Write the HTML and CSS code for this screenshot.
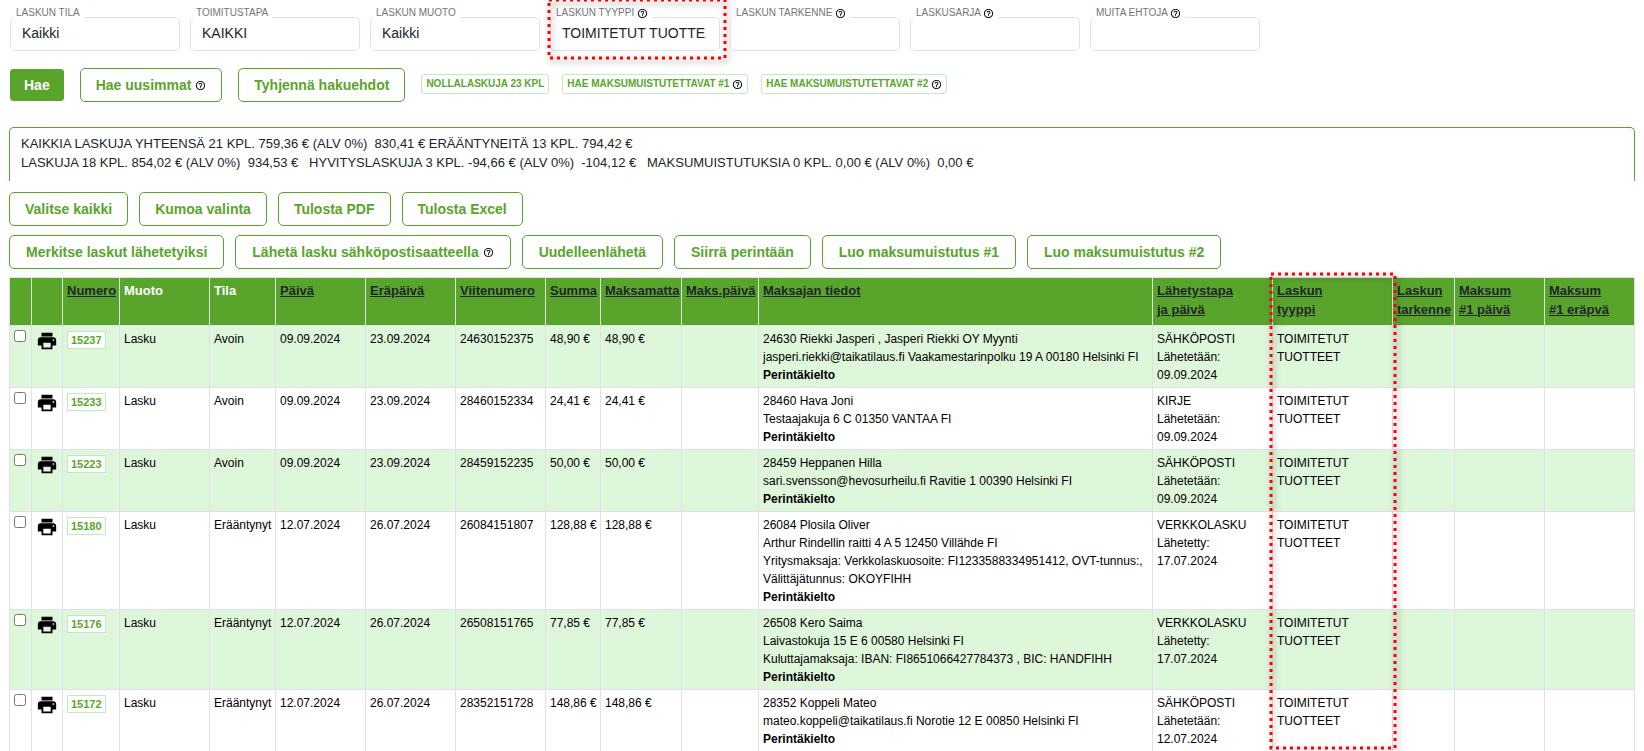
FILE: index.html
```
<!DOCTYPE html>
<html lang="fi">
<head>
<meta charset="utf-8">
<title>Laskut</title>
<link rel="stylesheet" href="styles.css">
</head>
<body>
<svg class="defs" aria-hidden="true">
  <symbol id="help" viewBox="0 0 24 24"><path d="M11 18h2v-2h-2v2zm1-16C6.48 2 2 6.48 2 12s4.480 10 10 10 10-4.480 10-10S17.520 2 12 2zm0 18c-4.410 0-8-3.590-8-8s3.590-8 8-8 8 3.590 8 8-3.590 8-8 8zm0-14c-2.210 0-4 1.790-4 4h2c0-1.100.900-2 2-2s2 .900 2 2c0 2-3 1.750-3 5h2c0-2.250 3-2.500 3-5 0-2.210-1.790-4-4-4z"/></symbol>
  <symbol id="print" viewBox="0 0 24 24"><path d="M19 8H5c-1.660 0-3 1.340-3 3v6h4v4h12v-4h4v-6c0-1.660-1.340-3-3-3zm-3 11H8v-5h8v5zm3-7c-.550 0-1-.450-1-1s.450-1 1-1 1 .450 1 1-.450 1-1 1zm-1-9H6v4h12V3z"/></symbol>
</svg>
<main class="page">
  <form class="filters">
    <div class="field"><label for="f1">LASKUN TILA</label><input id="f1" value="Kaikki"></div>
    <div class="field"><label for="f2">TOIMITUSTAPA</label><input id="f2" value="KAIKKI"></div>
    <div class="field"><label for="f3">LASKUN MUOTO</label><input id="f3" value="Kaikki"></div>
    <div class="field"><label for="f4">LASKUN TYYPPI <svg class="help"><use href="#help"/></svg></label><input id="f4" value="TOIMITETUT TUOTTEET">
      <svg class="marker marker-field" aria-hidden="true"><rect width="100%" height="100%"/></svg></div>
    <div class="field"><label for="f5">LASKUN TARKENNE <svg class="help"><use href="#help"/></svg></label><input id="f5"></div>
    <div class="field"><label for="f6">LASKUSARJA <svg class="help"><use href="#help"/></svg></label><input id="f6"></div>
    <div class="field"><label for="f7">MUITA EHTOJA <svg class="help"><use href="#help"/></svg></label><input id="f7"></div>
  </form>

  <div class="search-actions">
    <button class="btn btn-primary" type="button">Hae</button>
    <button class="btn" type="button">Hae uusimmat <svg class="help"><use href="#help"/></svg></button>
    <button class="btn" type="button">Tyhjennä hakuehdot</button>
    <div class="chips">
      <button class="chip" type="button">NOLLALASKUJA 23 KPL</button>
      <button class="chip" type="button">HAE MAKSUMUISTUTETTAVAT #1 <svg class="help"><use href="#help"/></svg></button>
      <button class="chip" type="button">HAE MAKSUMUISTUTETTAVAT #2 <svg class="help"><use href="#help"/></svg></button>
    </div>
  </div>

  <section class="summary">
    <p>KAIKKIA LASKUJA YHTEENSÄ 21 KPL. 759,36 € (ALV 0%) &nbsp;830,41 € ERÄÄNTYNEITÄ 13 KPL. 794,42 €</p>
    <p>LASKUJA 18 KPL. 854,02 € (ALV 0%) &nbsp;934,53 € &nbsp; HYVITYSLASKUJA 3 KPL. -94,66 € (ALV 0%) &nbsp;-104,12 € &nbsp; MAKSUMUISTUTUKSIA 0 KPL. 0,00 € (ALV 0%) &nbsp;0,00 €</p>
  </section>

  <div class="actions">
    <button class="btn" type="button">Valitse kaikki</button>
    <button class="btn" type="button">Kumoa valinta</button>
    <button class="btn" type="button">Tulosta PDF</button>
    <button class="btn" type="button">Tulosta Excel</button>
  </div>
  <div class="actions actions-bulk">
    <button class="btn" type="button">Merkitse laskut lähetetyiksi</button>
    <button class="btn" type="button">Lähetä lasku sähköpostisaatteella <svg class="help"><use href="#help"/></svg></button>
    <button class="btn" type="button">Uudelleenlähetä</button>
    <button class="btn" type="button">Siirrä perintään</button>
    <button class="btn" type="button">Luo maksumuistutus #1</button>
    <button class="btn" type="button">Luo maksumuistutus #2</button>
  </div>

  <div class="table-wrap">
    <table class="invoices">
      <colgroup>
        <col class="c-check"><col class="c-print"><col class="c-num"><col class="c-date"><col class="c-state"><col class="c-date"><col class="c-date"><col class="c-date"><col class="c-sum"><col class="c-open"><col class="c-paid"><col><col class="c-send"><col class="c-send"><col class="c-spec"><col class="c-date"><col class="c-date">
      </colgroup>
      <thead>
        <tr>
          <th></th><th></th>
          <th><a href="#">Numero</a></th><th>Muoto</th><th>Tila</th>
          <th><a href="#">Päivä</a></th><th><a href="#">Eräpäivä</a></th><th><a href="#">Viitenumero</a></th>
          <th><a href="#">Summa</a></th><th><a href="#">Maksamatta</a></th><th><a href="#">Maks.päivä</a></th>
          <th><a href="#">Maksajan tiedot</a></th><th><a href="#">Lähetystapa<br>ja päivä</a></th><th><a href="#">Laskun<br>tyyppi</a></th>
          <th><a href="#">Laskun<br>tarkenne</a></th><th><a href="#">Maksum<br>#1 päivä</a></th><th><a href="#">Maksum<br>#1 eräpvä</a></th>
        </tr>
      </thead>
      <tbody>
        <tr>
          <td><input type="checkbox" aria-label="Valitse 15237"></td><td><svg class="print"><use href="#print"/></svg></td>
          <td><a class="badge" href="#">15237</a></td><td>Lasku</td><td>Avoin</td><td>09.09.2024</td><td>23.09.2024</td><td>24630152375</td><td>48,90 €</td><td>48,90 €</td><td></td>
          <td>24630 Riekki Jasperi , Jasperi Riekki OY Myynti<br>jasperi.riekki@taikatilaus.fi Vaakamestarinpolku 19 A 00180 Helsinki FI<br><b>Perintäkielto</b></td>
          <td>SÄHKÖPOSTI<br>Lähetetään:<br>09.09.2024</td><td>TOIMITETUT<br>TUOTTEET</td><td></td><td></td><td></td>
        </tr>
        <tr>
          <td><input type="checkbox" aria-label="Valitse 15233"></td><td><svg class="print"><use href="#print"/></svg></td>
          <td><a class="badge" href="#">15233</a></td><td>Lasku</td><td>Avoin</td><td>09.09.2024</td><td>23.09.2024</td><td>28460152334</td><td>24,41 €</td><td>24,41 €</td><td></td>
          <td>28460 Hava Joni<br>Testaajakuja 6 C 01350 VANTAA FI<br><b>Perintäkielto</b></td>
          <td>KIRJE<br>Lähetetään:<br>09.09.2024</td><td>TOIMITETUT<br>TUOTTEET</td><td></td><td></td><td></td>
        </tr>
        <tr>
          <td><input type="checkbox" aria-label="Valitse 15223"></td><td><svg class="print"><use href="#print"/></svg></td>
          <td><a class="badge" href="#">15223</a></td><td>Lasku</td><td>Avoin</td><td>09.09.2024</td><td>23.09.2024</td><td>28459152235</td><td>50,00 €</td><td>50,00 €</td><td></td>
          <td>28459 Heppanen Hilla<br>sari.svensson@hevosurheilu.fi Ravitie 1 00390 Helsinki FI<br><b>Perintäkielto</b></td>
          <td>SÄHKÖPOSTI<br>Lähetetään:<br>09.09.2024</td><td>TOIMITETUT<br>TUOTTEET</td><td></td><td></td><td></td>
        </tr>
        <tr>
          <td><input type="checkbox" aria-label="Valitse 15180"></td><td><svg class="print"><use href="#print"/></svg></td>
          <td><a class="badge" href="#">15180</a></td><td>Lasku</td><td>Erääntynyt</td><td>12.07.2024</td><td>26.07.2024</td><td>26084151807</td><td>128,88 €</td><td>128,88 €</td><td></td>
          <td>26084 Plosila Oliver<br>Arthur Rindellin raitti 4 A 5 12450 Villähde FI<br>Yritysmaksaja: Verkkolaskuosoite: FI1233588334951412, OVT-tunnus:,<br>Välittäjätunnus: OKOYFIHH<br><b>Perintäkielto</b></td>
          <td>VERKKOLASKU<br>Lähetetty:<br>17.07.2024</td><td>TOIMITETUT<br>TUOTTEET</td><td></td><td></td><td></td>
        </tr>
        <tr>
          <td><input type="checkbox" aria-label="Valitse 15176"></td><td><svg class="print"><use href="#print"/></svg></td>
          <td><a class="badge" href="#">15176</a></td><td>Lasku</td><td>Erääntynyt</td><td>12.07.2024</td><td>26.07.2024</td><td>26508151765</td><td>77,85 €</td><td>77,85 €</td><td></td>
          <td>26508 Kero Saima<br>Laivastokuja 15 E 6 00580 Helsinki FI<br>Kuluttajamaksaja: IBAN: FI8651066427784373 , BIC: HANDFIHH<br><b>Perintäkielto</b></td>
          <td>VERKKOLASKU<br>Lähetetty:<br>17.07.2024</td><td>TOIMITETUT<br>TUOTTEET</td><td></td><td></td><td></td>
        </tr>
        <tr>
          <td><input type="checkbox" aria-label="Valitse 15172"></td><td><svg class="print"><use href="#print"/></svg></td>
          <td><a class="badge" href="#">15172</a></td><td>Lasku</td><td>Erääntynyt</td><td>12.07.2024</td><td>26.07.2024</td><td>28352151728</td><td>148,86 €</td><td>148,86 €</td><td></td>
          <td>28352 Koppeli Mateo<br>mateo.koppeli@taikatilaus.fi Norotie 12 E 00850 Helsinki FI<br><b>Perintäkielto</b></td>
          <td>SÄHKÖPOSTI<br>Lähetetään:<br>12.07.2024</td><td>TOIMITETUT<br>TUOTTEET</td><td></td><td></td><td></td>
        </tr>
      </tbody>
    </table>
    <svg class="marker marker-column" aria-hidden="true"><rect width="100%" height="100%"/></svg>
  </div>
</main>
</body>
</html>
```
FILE: styles.css
```
* { box-sizing: border-box; }

body {
  margin: 0;
  background: #fff;
  color: #000;
  font: 12px/18px "Liberation Sans", Arial, sans-serif;
}

.defs { position: absolute; width: 0; height: 0; }

.page { padding: 6px 9px 0; }

.help {
  width: 11px;
  height: 11px;
  fill: #000;
  vertical-align: -1px;
}

/* Filters */
.filters { display: flex; gap: 10px; padding-left: 1px; }

.field {
  position: relative;
  width: 170px;
  padding-top: 11px;
}

.field label {
  position: absolute;
  top: 0;
  left: 3px;
  padding: 0 4px 0 3px;
  background: #fff;
  color: #757575;
  font-size: 10px;
  line-height: 13px;
  white-space: nowrap;
}

.field .help { vertical-align: -3px; }

.field input {
  display: block;
  width: 100%;
  height: 34px;
  padding: 0 13px 2px 11px;
  border: 1px solid #dee2e6;
  border-radius: 5px;
  background: #fff;
  color: #212529;
  font: 14px/20px "Liberation Sans", Arial, sans-serif;
}

/* Buttons */
.btn {
  height: 34px;
  padding: 0 15px;
  border: 1px solid #59a52c;
  border-radius: 5px;
  background: #fff;
  color: #59a52c;
  font: bold 14px/20px "Liberation Sans", Arial, sans-serif;
  white-space: nowrap;
}

.btn-primary {
  height: 32px;
  padding: 0 13px;
  border-radius: 3px;
  background: #59a52c;
  color: #fff;
}

.search-actions {
  display: flex;
  align-items: center;
  gap: 16px;
  padding: 17px 0 25px 1px;
}

.chips { display: flex; align-items: flex-start; gap: 13px; padding-bottom: 2px; }

.chip {
  height: 20px;
  padding: 0 4px;
  border: 1px solid #bdecbd;
  border-radius: 3px;
  background: #fff;
  color: #59a52c;
  font: bold 10px/16px "Liberation Sans", Arial, sans-serif;
}

.chip .help { vertical-align: -3px; }

/* Summary */
.summary {
  height: 54px;
  margin-bottom: 11px;
  padding: 6px 11px 0;
  border: 1px solid #59a52c;
  border-bottom: 0;
  border-radius: 5px 5px 0 0;
  color: #212529;
  font-size: 13px;
  line-height: 19px;
}

.summary p { margin: 0; }

.actions { display: flex; gap: 11px; margin-bottom: 9px; }

.actions-bulk { margin-bottom: 8px; }
.actions-bulk .btn { padding: 0 16px; }

/* Invoice table */
.table-wrap { position: relative; }

.invoices {
  width: 100%;
  table-layout: fixed;
  border-collapse: collapse;
}

.c-check { width: 22px; }
.c-print { width: 31px; }
.c-num { width: 57px; }
.c-date { width: 90px; }
.c-state { width: 66px; }
.c-sum { width: 55px; }
.c-open { width: 81px; }
.c-paid { width: 77px; }
.c-send { width: 120px; }
.c-spec { width: 62px; }

.invoices th,
.invoices td {
  padding: 4px 0 3px 4px;
  border: 1px solid #dee2e6;
  text-align: left;
  vertical-align: top;
  white-space: nowrap;
}

.invoices td { border-top-color: #d9ecf2; }

.invoices th {
  padding-top: 3px;
  padding-bottom: 6px;
  background: #59a52c;
  color: #fff;
  font-size: 13px;
  line-height: 19px;
}

.invoices th a { color: #212529; }

.invoices tbody tr:nth-child(odd) { background: #def6da; }
.invoices tbody tr:last-child td { border-bottom: 0; }

.invoices input {
  display: block;
  width: 12px;
  height: 12px;
  margin: 0;
}

.print { display: block; width: 22px; height: 22px; }

.badge {
  display: inline-block;
  margin-top: 1px;
  padding: 0 3px;
  border: 1px solid #bdecbd;
  background: #fff;
  color: #59a52c;
  font-weight: bold;
  font-size: 11px;
  line-height: 16px;
  text-decoration: none;
}

/* Red dotted callouts */
.marker {
  position: absolute;
  overflow: visible;
  pointer-events: none;
  filter: drop-shadow(2px 3px 3px rgba(0, 0, 0, 0.5));
}

.marker rect {
  fill: none;
  stroke: #f00;
  stroke-width: 3px;
  stroke-dasharray: 3 4;
}

.marker-field { top: -6px; left: -1px; width: 176px; height: 58px; }
.marker-column { top: -3px; right: 240px; width: 124px; height: 474px; }
```
